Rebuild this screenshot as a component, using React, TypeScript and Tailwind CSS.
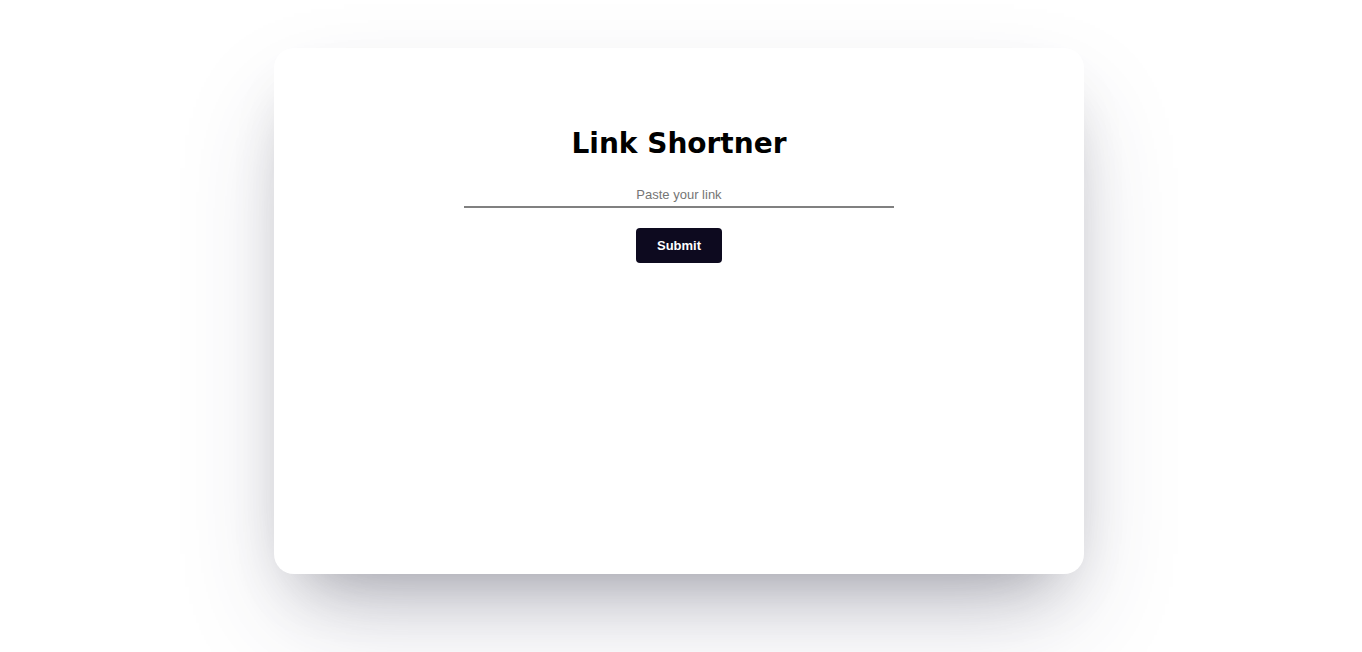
import { useState } from "react";

export default function App() {
	const [link, setLink] = useState("");

	return (
		<div className="min-h-[652px] w-full bg-white flex justify-center pt-12 pr-1 font-['Liberation_Sans',Arial,sans-serif]">
			<div className="w-[810px] h-[526px] bg-white rounded-[20px] shadow-[0_50px_100px_-20px_rgba(50,50,93,0.25),0_30px_60px_-30px_rgba(0,0,0,0.3)] flex flex-col items-center pt-[76px]">
				<h1 className="text-[28px] leading-[40px] font-bold text-black font-['Comic_Sans_MS','DejaVu_Sans',cursive]">
					Link Shortner
				</h1>
				<input
					value={link}
					onChange={(e) => setLink(e.target.value)}
					placeholder="Paste your link"
					className="mt-[14px] w-[430px] h-[30px] pt-1 text-center text-[13px] text-gray-700 placeholder:text-[#757575] border-b-2 border-[#808080] outline-none bg-transparent"
				/>
				<button className="mt-[20px] w-[86px] h-[35px] rounded bg-[#0d0a1f] text-white text-[13px] font-bold">
					Submit
				</button>
			</div>
		</div>
	);
}
